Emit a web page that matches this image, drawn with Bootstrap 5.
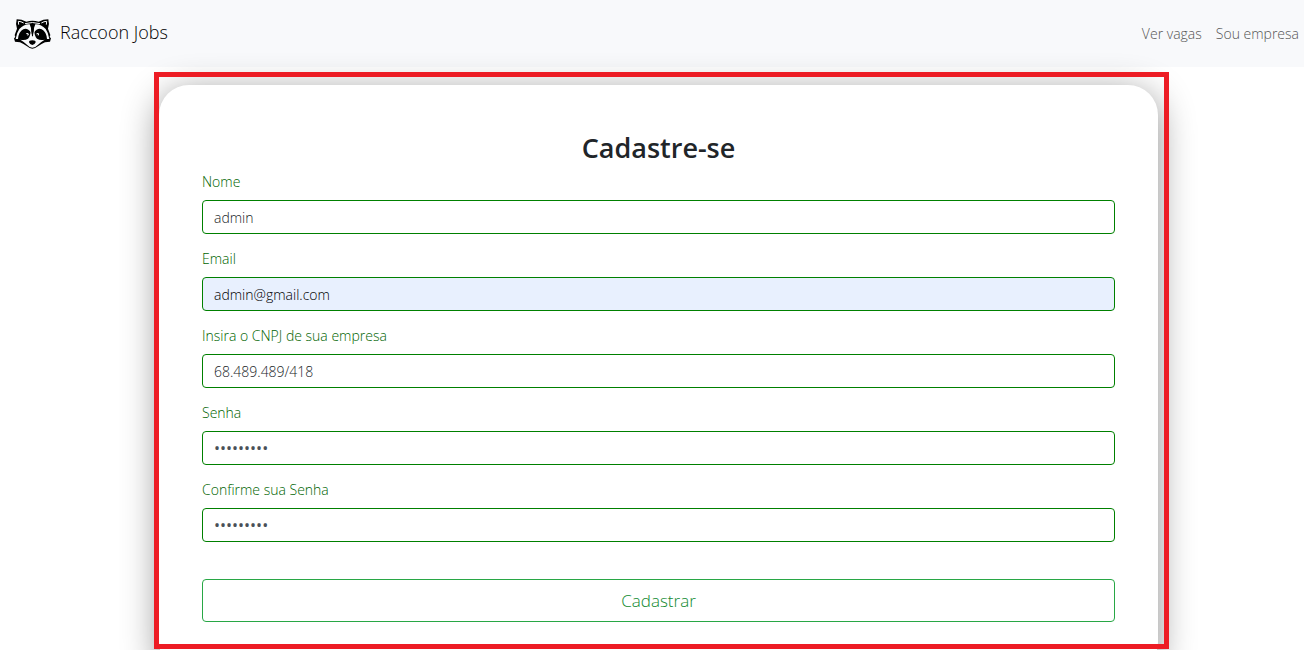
<!DOCTYPE html>
<html lang="pt-BR">
<head>
<meta charset="utf-8">
<meta name="viewport" content="width=device-width, initial-scale=1">
<title>Raccoon Jobs</title>
<link href="https://cdn.jsdelivr.net/npm/bootstrap@5.3.0/dist/css/bootstrap.min.css" rel="stylesheet">
<style>
  body { font-family: "Open Sans", "Noto Sans", sans-serif; font-size: 14px; font-weight: 300; line-height: 20px; overflow-x: hidden; }
  .topbar { background: #f8f9fb; height: 67px; padding: 0 5px 0 14px; }
  .topbar .navbar-brand { font-size: 18px; line-height: 26px; color: #000; gap: 9px; }
  .topbar .navbar-nav .nav-link { color: #555; padding: 0; font-weight: 300; }
  .topbar .navbar-nav { gap: 14px; }
  .signup { padding: 5px 135px 1px 154px; }
  .signup-frame { display: flow-root; position: relative; padding: 8px 11px 0 5px; }
  .signup-frame::after { content: ""; position: absolute; inset: 0; border: 5px solid #ed1c24; pointer-events: none; }
  .signup-card { border-radius: 30px; padding: 43px 43px 50px; margin: 5px 0 -23px; background: #fff; box-shadow: 0 8px 36px rgba(0, 0, 0, .45); }
  .signup-card h1 { font-size: 27px; line-height: 40px; font-weight: 600; margin: 0; }
  .signup-card label { color: #006400; display: block; margin-bottom: 8px; }
  .signup-card .form-control { height: 34px; padding: 0 11px; border: 1px solid green; border-radius: 4px; font-size: 14px; font-weight: 300; color: #212529; }
  .signup-card .form-control[type=password] { font-size: 16px; font-weight: 400; color: #495057; }
  .signup-card .autofilled { background: #e8f0fe; color: #000; }
  .fields { display: grid; gap: 15px; padding-top: 4px; }
  .btn-send { --bs-btn-color: #118a30; --bs-btn-border-color: #28a745; height: 43px; padding: 0; margin-top: 37px; border-radius: 4px; font-size: 17px; font-weight: 300; }
</style>
</head>
<body>
<nav class="navbar navbar-expand topbar justify-content-between">
  <a class="navbar-brand d-flex align-items-center p-0 m-0" href="#">
    <svg width="37" height="30" viewBox="0 0 111 90" aria-hidden="true">
      <path fill="#000" d="M8 1Q23 1 37 8Q55 3 74 8Q88 1 103 1Q107 14 102 29L109 48L107 54L111 58L108 68L93 70Q80 76 72 82Q63 89 55 89Q47 89 39 82Q31 76 18 70L3 68L0 58L4 54L2 48L9 29Q4 14 8 1Z"/>
      <path stroke="#f8f9fb" stroke-width="3" fill="none" d="M14 17L13 7Q21 7 29 12M97 17L98 7Q90 7 82 12M33 14Q55 7 78 14"/>
      <path fill="#f8f9fb" d="M16 30Q30 15 47 16L51 27L52 42Q40 25 28 31Q14 38 12 60L5 60Q8 41 16 30ZM95 30Q81 15 64 16L60 27L59 42Q71 25 83 31Q97 38 99 60L106 60Q103 41 95 30Z"/>
      <path fill="#f8f9fb" d="M50 34L55 50L61 34Q61 52 69 59Q78 65 92 62Q80 69 74 76Q65 86 55 86Q46 86 37 76Q31 69 19 62Q33 65 42 59Q50 52 50 34Z"/>
      <path fill="#000" d="M52 20L59 20L57 52L54 52ZM55 64Q66 64 65 70Q63 76 55 78Q47 76 45 70Q44 64 55 64Z"/>
      <circle cx="40" cy="46" r="4" fill="#f8f9fb"/><circle cx="71" cy="46" r="4" fill="#f8f9fb"/>
      <circle cx="38" cy="48" r="3"/><circle cx="69" cy="48" r="3"/>
    </svg>
    <span class="pb-1">Raccoon Jobs</span>
  </a>
  <div class="navbar-nav">
    <a class="nav-link" href="#">Ver vagas</a>
    <a class="nav-link" href="#">Sou empresa</a>
  </div>
</nav>
<main class="signup">
  <div class="signup-frame">
    <form class="signup-card">
      <h1 class="text-center">Cadastre-se</h1>
      <div class="fields">
        <div><label for="nome">Nome</label><input class="form-control" id="nome" type="text" value="admin"></div>
        <div><label for="email">Email</label><input class="form-control autofilled" id="email" type="email" value="admin@gmail.com"></div>
        <div><label for="cnpj">Insira o CNPJ de sua empresa</label><input class="form-control" id="cnpj" type="text" value="68.489.489/418"></div>
        <div><label for="senha">Senha</label><input class="form-control" id="senha" type="password" value="adminjobs"></div>
        <div><label for="confirma">Confirme sua Senha</label><input class="form-control" id="confirma" type="password" value="adminjobs"></div>
      </div>
      <button class="btn btn-outline-success btn-send w-100" type="button">Cadastrar</button>
    </form>
  </div>
</main>
<script src="https://cdn.jsdelivr.net/npm/bootstrap@5.3.0/dist/js/bootstrap.bundle.min.js"></script>
</body>
</html>
